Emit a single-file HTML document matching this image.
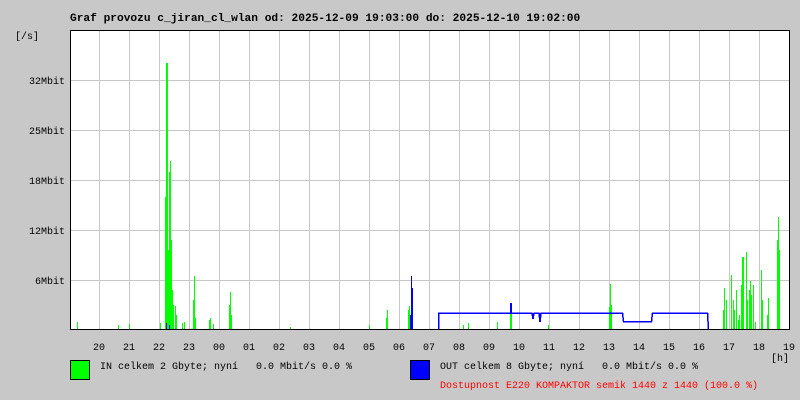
<!DOCTYPE html>
<html><head><meta charset="utf-8"><style>
html,body{margin:0;padding:0;background:#c8c8c8;}
body{width:800px;height:400px;overflow:hidden;position:relative;font-family:"Liberation Mono","DejaVu Sans Mono",monospace;font-size:10px;color:#000;}
.t{position:absolute;white-space:pre;line-height:12px;}
</style></head><body>
<svg width="800" height="400" style="position:absolute;left:0;top:0" shape-rendering="crispEdges">
<rect x="70" y="30" width="720" height="300" fill="#fff"/>
<g stroke="#c8c8c8" stroke-width="1">
<line x1="70" y1="80.5" x2="790" y2="80.5"/><line x1="70" y1="130.5" x2="790" y2="130.5"/>
<line x1="70" y1="180.5" x2="790" y2="180.5"/><line x1="70" y1="230.5" x2="790" y2="230.5"/>
<line x1="70" y1="280.5" x2="790" y2="280.5"/>
<line x1="99.5" y1="30" x2="99.5" y2="330"/><line x1="129.5" y1="30" x2="129.5" y2="330"/>
<line x1="159.5" y1="30" x2="159.5" y2="330"/><line x1="189.5" y1="30" x2="189.5" y2="330"/>
<line x1="219.5" y1="30" x2="219.5" y2="330"/><line x1="249.5" y1="30" x2="249.5" y2="330"/>
<line x1="279.5" y1="30" x2="279.5" y2="330"/><line x1="309.5" y1="30" x2="309.5" y2="330"/>
<line x1="339.5" y1="30" x2="339.5" y2="330"/><line x1="369.5" y1="30" x2="369.5" y2="330"/>
<line x1="399.5" y1="30" x2="399.5" y2="330"/><line x1="429.5" y1="30" x2="429.5" y2="330"/>
<line x1="459.5" y1="30" x2="459.5" y2="330"/><line x1="489.5" y1="30" x2="489.5" y2="330"/>
<line x1="519.5" y1="30" x2="519.5" y2="330"/><line x1="549.5" y1="30" x2="549.5" y2="330"/>
<line x1="579.5" y1="30" x2="579.5" y2="330"/><line x1="609.5" y1="30" x2="609.5" y2="330"/>
<line x1="639.5" y1="30" x2="639.5" y2="330"/><line x1="669.5" y1="30" x2="669.5" y2="330"/>
<line x1="699.5" y1="30" x2="699.5" y2="330"/><line x1="729.5" y1="30" x2="729.5" y2="330"/>
<line x1="759.5" y1="30" x2="759.5" y2="330"/>
</g>
<g stroke="#00ff00" stroke-width="1">
<line x1="70" y1="329.5" x2="130" y2="329.5"/>
<line x1="77.5" y1="322" x2="77.5" y2="330"/><line x1="118.5" y1="325" x2="118.5" y2="330"/><line x1="129.5" y1="324" x2="129.5" y2="330"/>
<line x1="160.5" y1="323" x2="160.5" y2="330"/>
<line x1="165.5" y1="197" x2="165.5" y2="330"/>
<line x1="166.5" y1="63" x2="166.5" y2="330"/><line x1="167.5" y1="63" x2="167.5" y2="330"/>
<line x1="168.5" y1="250" x2="168.5" y2="330"/>
<line x1="169.5" y1="172" x2="169.5" y2="330"/><line x1="170.5" y1="161" x2="170.5" y2="330"/>
<line x1="171.5" y1="240" x2="171.5" y2="330"/><line x1="172.5" y1="290" x2="172.5" y2="330"/>
<line x1="173.5" y1="305" x2="173.5" y2="330"/><line x1="175.5" y1="306" x2="175.5" y2="330"/>
<line x1="176.5" y1="315" x2="176.5" y2="330"/><line x1="182.5" y1="323" x2="182.5" y2="330"/>
<line x1="184.5" y1="322" x2="184.5" y2="330"/>
<line x1="193.5" y1="300" x2="193.5" y2="330"/><line x1="194.5" y1="276" x2="194.5" y2="330"/>
<line x1="195.5" y1="318" x2="195.5" y2="330"/>
<line x1="209.5" y1="320" x2="209.5" y2="330"/><line x1="210.5" y1="318" x2="210.5" y2="330"/>
<line x1="213.5" y1="324" x2="213.5" y2="330"/>
<line x1="229.5" y1="305" x2="229.5" y2="330"/><line x1="230.5" y1="292" x2="230.5" y2="330"/><line x1="231.5" y1="315" x2="231.5" y2="330"/>
<line x1="290.5" y1="327" x2="290.5" y2="330"/><line x1="369.5" y1="325" x2="369.5" y2="330"/>
<line x1="386.5" y1="318" x2="386.5" y2="330"/><line x1="387.5" y1="310" x2="387.5" y2="330"/>
<line x1="408.5" y1="310" x2="408.5" y2="330"/><line x1="409.5" y1="306" x2="409.5" y2="330"/>
<line x1="463.5" y1="325" x2="463.5" y2="330"/><line x1="468.5" y1="323" x2="468.5" y2="330"/>
<line x1="497.5" y1="322" x2="497.5" y2="330"/><line x1="510.5" y1="312" x2="510.5" y2="330"/><line x1="511.5" y1="312" x2="511.5" y2="330"/>
<line x1="548.5" y1="325" x2="548.5" y2="330"/>
<line x1="609.5" y1="307" x2="609.5" y2="330"/><line x1="610.5" y1="284" x2="610.5" y2="330"/><line x1="611.5" y1="305" x2="611.5" y2="330"/>
<line x1="440" y1="329.5" x2="710" y2="329.5" stroke-dasharray="2,6"/>
<line x1="723.5" y1="310" x2="723.5" y2="330"/><line x1="724.5" y1="288" x2="724.5" y2="330"/>
<line x1="726.5" y1="300" x2="726.5" y2="330"/>
<line x1="731.5" y1="275" x2="731.5" y2="330"/><line x1="733.5" y1="300" x2="733.5" y2="330"/>
<line x1="734.5" y1="310" x2="734.5" y2="330"/><line x1="736.5" y1="290" x2="736.5" y2="330"/>
<line x1="738.5" y1="320" x2="738.5" y2="330"/><line x1="739.5" y1="315" x2="739.5" y2="330"/>
<line x1="741.5" y1="285" x2="741.5" y2="330"/><line x1="742.5" y1="257" x2="742.5" y2="330"/>
<line x1="743.5" y1="257" x2="743.5" y2="330"/><line x1="746.5" y1="252" x2="746.5" y2="330"/>
<line x1="747.5" y1="300" x2="747.5" y2="330"/><line x1="749.5" y1="290" x2="749.5" y2="330"/>
<line x1="750.5" y1="281" x2="750.5" y2="330"/><line x1="751.5" y1="295" x2="751.5" y2="330"/>
<line x1="753.5" y1="285" x2="753.5" y2="330"/><line x1="755.5" y1="322" x2="755.5" y2="330"/>
<line x1="761.5" y1="270" x2="761.5" y2="330"/><line x1="762.5" y1="300" x2="762.5" y2="330"/>
<line x1="767.5" y1="315" x2="767.5" y2="330"/><line x1="768.5" y1="298" x2="768.5" y2="330"/>
<line x1="777.5" y1="240" x2="777.5" y2="330"/><line x1="778.5" y1="217" x2="778.5" y2="330"/>
<line x1="779.5" y1="250" x2="779.5" y2="330"/>
</g>
<g stroke="#0000ff" stroke-width="1" fill="none">
<line x1="166.5" y1="323" x2="166.5" y2="330"/><line x1="169.5" y1="325" x2="169.5" y2="330"/>
<line x1="411.5" y1="276" x2="411.5" y2="330"/><line x1="412.5" y1="288" x2="412.5" y2="330"/>
<line x1="410.5" y1="315" x2="410.5" y2="330"/>
<polyline stroke-width="1.5" points="438.5,330 438.5,313 532,313 533,319 534,313 539,313 540,322 541,313 622.5,313 623.5,321.5 651.5,321.5 652.5,313 707.5,313 708.5,330"/>
<line x1="510.5" y1="303" x2="510.5" y2="313"/><line x1="511.5" y1="303" x2="511.5" y2="313"/>
<line x1="733" y1="329.5" x2="740" y2="329.5"/>
</g>
<rect x="70.5" y="30.5" width="719" height="299" fill="none" stroke="#000" stroke-width="1"/>
<rect x="70.5" y="360.5" width="19" height="19" fill="#00ff00" stroke="#000"/>
<rect x="410.5" y="360.5" width="19" height="19" fill="#0000ff" stroke="#000"/>
</svg>
<div class="t" style="left:70px;top:13px;font-weight:bold;font-size:11.2px;">Graf provozu c_jiran_cl_wlan od: 2025-12-09 19:03:00 do: 2025-12-10 19:02:00</div>
<div class="t" style="left:15px;top:32px;">[/s]</div>
<div class="t" style="left:0;width:65px;text-align:right;top:77px;">32Mbit</div>
<div class="t" style="left:0;width:65px;text-align:right;top:127px;">25Mbit</div>
<div class="t" style="left:0;width:65px;text-align:right;top:177px;">18Mbit</div>
<div class="t" style="left:0;width:65px;text-align:right;top:227px;">12Mbit</div>
<div class="t" style="left:0;width:65px;text-align:right;top:277px;">6Mbit</div>
<div class="t" style="left:93px;top:343px;">20</div>
<div class="t" style="left:123px;top:343px;">21</div><div class="t" style="left:153px;top:343px;">22</div>
<div class="t" style="left:183px;top:343px;">23</div><div class="t" style="left:213px;top:343px;">00</div>
<div class="t" style="left:243px;top:343px;">01</div><div class="t" style="left:273px;top:343px;">02</div>
<div class="t" style="left:303px;top:343px;">03</div><div class="t" style="left:333px;top:343px;">04</div>
<div class="t" style="left:363px;top:343px;">05</div><div class="t" style="left:393px;top:343px;">06</div>
<div class="t" style="left:423px;top:343px;">07</div><div class="t" style="left:453px;top:343px;">08</div>
<div class="t" style="left:483px;top:343px;">09</div><div class="t" style="left:513px;top:343px;">10</div>
<div class="t" style="left:543px;top:343px;">11</div><div class="t" style="left:573px;top:343px;">12</div>
<div class="t" style="left:603px;top:343px;">13</div><div class="t" style="left:633px;top:343px;">14</div>
<div class="t" style="left:663px;top:343px;">15</div><div class="t" style="left:693px;top:343px;">16</div>
<div class="t" style="left:723px;top:343px;">17</div><div class="t" style="left:753px;top:343px;">18</div>
<div class="t" style="left:783px;top:343px;">19</div>
<div class="t" style="left:771px;top:354px;">[h]</div>
<div class="t" style="left:100px;top:362px;">IN celkem 2 Gbyte; nyní   0.0 Mbit/s 0.0 %</div>
<div class="t" style="left:440px;top:362px;">OUT celkem 8 Gbyte; nyní   0.0 Mbit/s 0.0 %</div>
<div class="t" style="left:440px;top:381px;color:#ff0000;">Dostupnost E220 KOMPAKTOR semik 1440 z 1440 (100.0 %)</div>
</body></html>
